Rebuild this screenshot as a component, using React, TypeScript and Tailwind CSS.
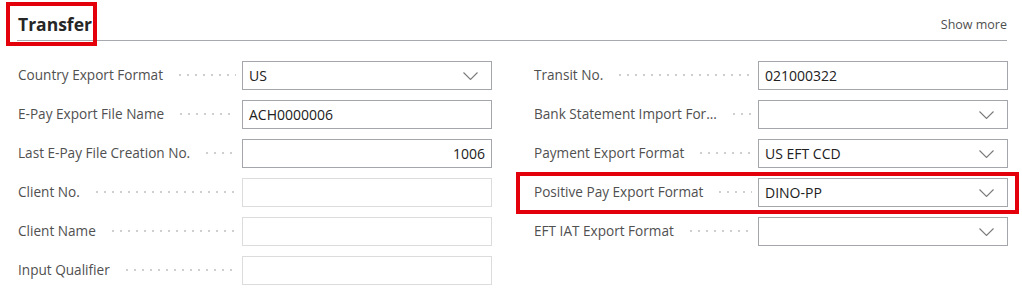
import React from 'react';

type Field = {
  label: string;
  value?: string;
  kind: 'text' | 'select' | 'disabled';
  align?: 'right';
  marked?: boolean;
};

const left: Field[] = [
  { label: 'Country Export Format', value: 'US', kind: 'select' },
  { label: 'E-Pay Export File Name', value: 'ACH0000006', kind: 'text' },
  { label: 'Last E-Pay File Creation No.', value: '1006', kind: 'text', align: 'right' },
  { label: 'Client No.', kind: 'disabled' },
  { label: 'Client Name', kind: 'disabled' },
  { label: 'Input Qualifier', kind: 'disabled' },
];

const right: Field[] = [
  { label: 'Transit No.', value: '021000322', kind: 'text' },
  { label: 'Bank Statement Import For...', kind: 'select' },
  { label: 'Payment Export Format', value: 'US EFT CCD', kind: 'select' },
  { label: 'Positive Pay Export Format', value: 'DINO-PP', kind: 'select', marked: true },
  { label: 'EFT IAT Export Format', kind: 'select' },
];

const Chevron = () => (
  <svg width="15" height="8" viewBox="0 0 15 8" className="shrink-0">
    <polyline points="0.5,0.5 7.5,7.5 14.5,0.5" fill="none" stroke="#7a7a7a" strokeWidth="1.1" />
  </svg>
);

const Row = ({ f }: { f: Field }) => (
  <div className="relative flex items-center h-[29px]">
    {f.marked && (
      <span className="absolute left-[-18px] right-[-11px] top-[-6px] bottom-[-7px] border-[4px] border-[#e4000b] pointer-events-none" />
    )}
    <div className="flex items-center w-[224px] shrink-0 pr-[6px]">
      <span className="text-[13.6px] text-[#505050] whitespace-nowrap">{f.label}</span>
      <span className="flex-1 ml-[13px] h-[4px] bg-[radial-gradient(circle,#cdcdcd_0.7px,transparent_1.1px)] bg-[length:8px_4px] bg-repeat-x" />
    </div>
    <div
      className={`flex items-center w-[250px] h-[29px] px-[6px] border ${
        f.kind === 'disabled' ? 'border-[#dcdcdc]' : 'border-[#a3a6aa]'
      } ${f.align === 'right' ? 'justify-end' : 'justify-between'}`}
    >
      <span className="text-[14px] text-[#212121]">{f.value}</span>
      {f.kind === 'select' && (
        <span className="mr-[7px]">
          <Chevron />
        </span>
      )}
    </div>
  </div>
);

export default function App() {
  return (
    <div
      className="w-[1022px] h-[297px] bg-white pl-[17px] pr-[15px]"
      style={{ fontFamily: '"Open Sans", "Noto Sans", sans-serif' }}
    >
      <div className="relative flex items-end justify-between h-[41px] border-b border-[#a6a9ad]">
        <span className="absolute left-[-11px] top-[2px] w-[91px] h-[44px] border-[4px] border-[#e4000b]" />
        <span className="pl-[1px] pb-[7px] text-[17.5px] font-bold text-[#262626] leading-none">Transfer</span>
        <span className="pb-[9px] text-[12.5px] text-[#505050] leading-none">Show more</span>
      </div>
      <div className="flex gap-[42px] pt-[20px] pl-[1px]">
        <div className="flex flex-col gap-[10px] w-[474px]">
          {left.map((f) => (
            <Row key={f.label} f={f} />
          ))}
        </div>
        <div className="flex flex-col gap-[10px] w-[474px]">
          {right.map((f) => (
            <Row key={f.label} f={f} />
          ))}
        </div>
      </div>
    </div>
  );
}
